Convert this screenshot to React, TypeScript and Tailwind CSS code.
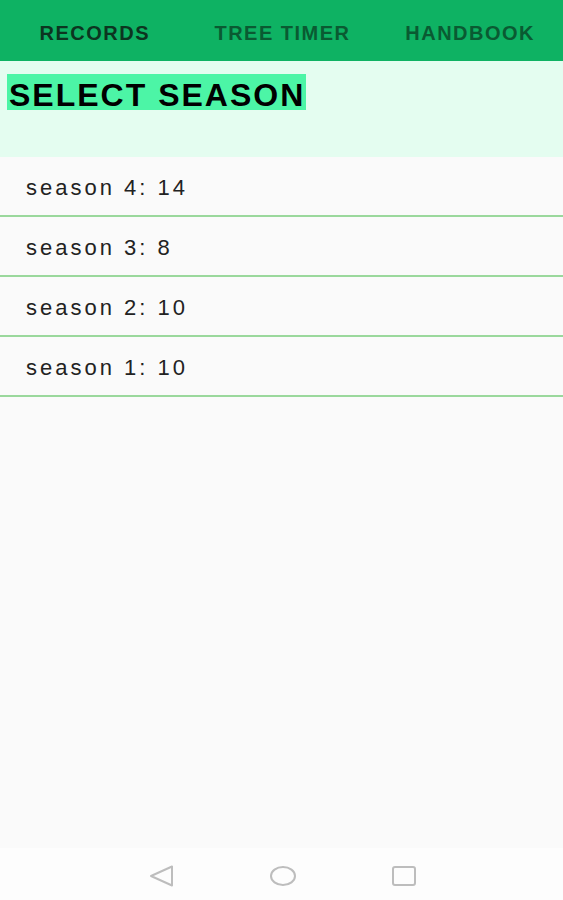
import React from 'react';

const seasons = [
  { name: 'season 4', count: 14 },
  { name: 'season 3', count: 8 },
  { name: 'season 2', count: 10 },
  { name: 'season 1', count: 10 },
];

const tabs = ['RECORDS', 'TREE TIMER', 'HANDBOOK'];

function NavBar() {
  return (
    <div className="h-[52px] bg-[#fdfdfd] flex items-center justify-center">
      <div className="flex items-center gap-[94px] pt-[4px] pl-[2px]">
        <svg width="26" height="22" viewBox="0 0 26 22" fill="none">
          <path d="M2 11 L23 1.5 L23 20.5 Z" stroke="#bdbdbd" strokeWidth="2" strokeLinejoin="round" />
        </svg>
        <svg width="28" height="22" viewBox="0 0 28 22" fill="none">
          <ellipse cx="14" cy="11" rx="12" ry="9" stroke="#bdbdbd" strokeWidth="2" />
        </svg>
        <svg width="26" height="22" viewBox="0 0 26 22" fill="none">
          <rect x="2" y="2" width="22" height="18" rx="2" stroke="#bdbdbd" strokeWidth="2" />
        </svg>
      </div>
    </div>
  );
}

export default function App() {
  return (
    <div
      className="w-[563px] h-[900px] flex flex-col bg-[#fafafa] overflow-hidden"
      style={{ fontFamily: '"Liberation Sans", Arial, sans-serif' }}
    >
      <div className="h-[61px] bg-[#0eb263] grid grid-cols-3 items-center shrink-0">
        {tabs.map((t, i) => (
          <div
            key={t}
            className={`text-center text-[20px] font-semibold tracking-[1.5px] pt-[5px] pl-[2px] ${
              i === 0 ? 'text-[#0c3520]' : 'text-[#0a5a32]'
            }`}
          >
            {t}
          </div>
        ))}
      </div>

      <div className="h-[96px] bg-[#e4fdf0] pt-[13px] pl-[7px] shrink-0">
        <span className="inline-block bg-[#4cf5a6] text-black text-[32px] font-bold h-[36px] leading-[32px] pt-[5px] tracking-[2px] pl-[2px] pr-[1px]">
          SELECT SEASON
        </span>
      </div>

      <div className="flex flex-col">
        {seasons.map((s) => (
          <div
            key={s.name}
            className="h-[60px] flex items-center pl-[26px] pt-[2px] border-b-2 border-[#9ad89c] text-[22px] tracking-[3px] text-[#222]"
          >
            {s.name}: {s.count}
          </div>
        ))}
      </div>

      <div className="flex-1" />
      <NavBar />
    </div>
  );
}
